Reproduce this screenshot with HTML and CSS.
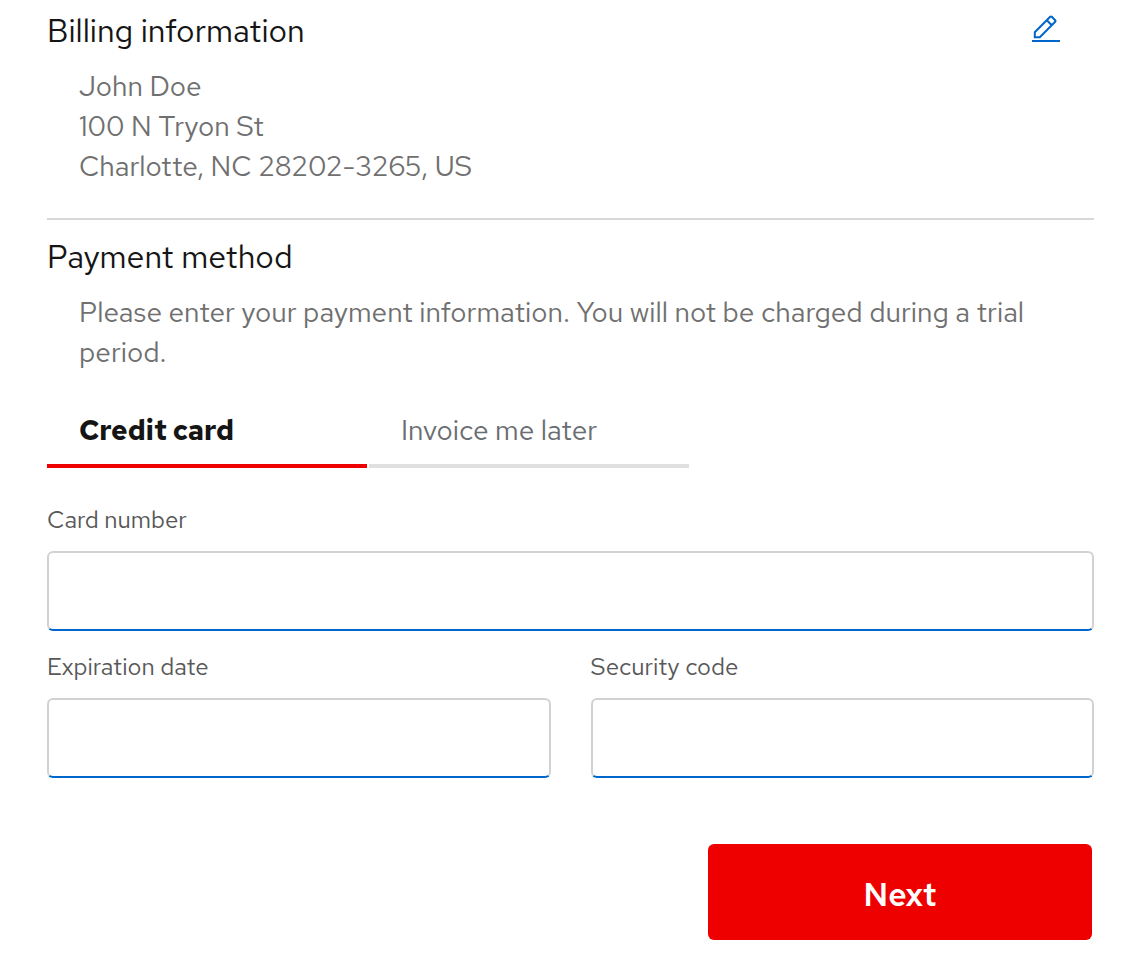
FILE: index.html
```html
<!DOCTYPE html>
<html lang="en">
<head>
<meta charset="utf-8">
<meta name="viewport" content="width=device-width, initial-scale=1">
<title>Billing and payment</title>
<link rel="stylesheet" href="styles.css">
</head>
<body>
<main class="checkout">
  <section class="billing">
    <header class="section-head">
      <h2 class="section-title">Billing information</h2>
      <button class="edit" type="button" aria-label="Edit billing information">
        <svg class="edit-icon" viewBox="0 0 28 28" aria-hidden="true">
          <path d="M2.8 23.2V18.2L18.2 2.8Q19 2 19.8 2.8L23.2 6.2Q24 7 23.2 7.8L7.8 23.2ZM14.8 6.2L19.8 11.2"/>
          <path d="M0 27H28"/>
        </svg>
      </button>
    </header>
    <address class="details">John Doe<br>100 N Tryon St<br>Charlotte, NC 28202-3265, US</address>
  </section>
  <section class="payment">
    <h2 class="section-title">Payment method</h2>
    <p class="details">Please enter your payment information. You will not be charged during a trial period.</p>
    <div class="tabs" role="tablist">
      <button class="tab tab-active" type="button" role="tab" aria-selected="true">Credit card</button>
      <button class="tab" type="button" role="tab" aria-selected="false">Invoice me later</button>
    </div>
    <form class="card-form">
      <div class="field field-wide">
        <label class="label" for="card-number">Card number</label>
        <input class="input" id="card-number" type="text" inputmode="numeric">
      </div>
      <div class="field">
        <label class="label" for="expiration">Expiration date</label>
        <input class="input" id="expiration" type="text">
      </div>
      <div class="field">
        <label class="label" for="security-code">Security code</label>
        <input class="input" id="security-code" type="text" inputmode="numeric">
      </div>
      <div class="actions">
        <button class="next" type="button">Next</button>
      </div>
    </form>
  </section>
</main>
</body>
</html>
```
FILE: styles.css
```css
* {
  box-sizing: border-box;
}

body {
  margin: 0;
  background: #fff;
  color: #151515;
  font-family: "Red Hat Text", Lato, sans-serif;
  font-size: 28px;
  line-height: 40px;
}

.checkout {
  padding: 7px 30px 22px 47px;
}

.billing {
  padding-bottom: 32px;
  border-bottom: 2px solid #d8d8d8;
}

.section-head {
  display: flex;
  justify-content: space-between;
  align-items: center;
  padding-right: 34px;
}

.section-title {
  margin: 0;
  font-size: 32px;
  font-weight: 400;
  line-height: 48px;
}

.edit {
  display: flex;
  padding: 0 0 6px;
  border: 0;
  background: none;
  cursor: pointer;
}

.edit-icon {
  width: 28px;
  height: 28px;
  fill: none;
  stroke: #06c;
  stroke-width: 2;
}

.details {
  margin: 11px 0 0;
  padding: 0 32px;
  color: #707070;
  font-style: normal;
}

.payment {
  padding-top: 13px;
}

.tabs {
  display: flex;
  gap: 2px;
  margin-top: 22px;
}

.tab {
  width: 320px;
  padding: 16px 32px 14px;
  border: 0;
  border-bottom: 4px solid #e0e0e0;
  background: none;
  color: #6a6e73;
  font: inherit;
  text-align: left;
  cursor: pointer;
}

.tab-active {
  border-color: #e00;
  color: #151515;
  font-weight: 700;
}

.card-form {
  display: grid;
  grid-template-columns: 1fr 1fr;
  gap: 20px 40px;
  margin-top: 36px;
}

.field {
  display: flex;
  flex-direction: column;
  gap: 15px;
}

.field-wide,
.actions {
  grid-column: 1 / -1;
}

.label {
  color: #585858;
  font-size: 24px;
  line-height: 32px;
}

.input {
  width: 100%;
  height: 80px;
  padding: 0 16px;
  border: 2px solid #d2d2d2;
  border-bottom-color: #06c;
  border-radius: 6px;
  background: #fff;
  color: #151515;
  font: inherit;
}

.actions {
  display: flex;
  justify-content: flex-end;
  padding: 46px 2px 0 0;
}

.next {
  width: 384px;
  padding: 31px 32px 25px;
  border: 0;
  border-radius: 6px;
  background: #e00;
  color: #fff;
  font: inherit;
  font-size: 32px;
  font-weight: 600;
  cursor: pointer;
}
```
